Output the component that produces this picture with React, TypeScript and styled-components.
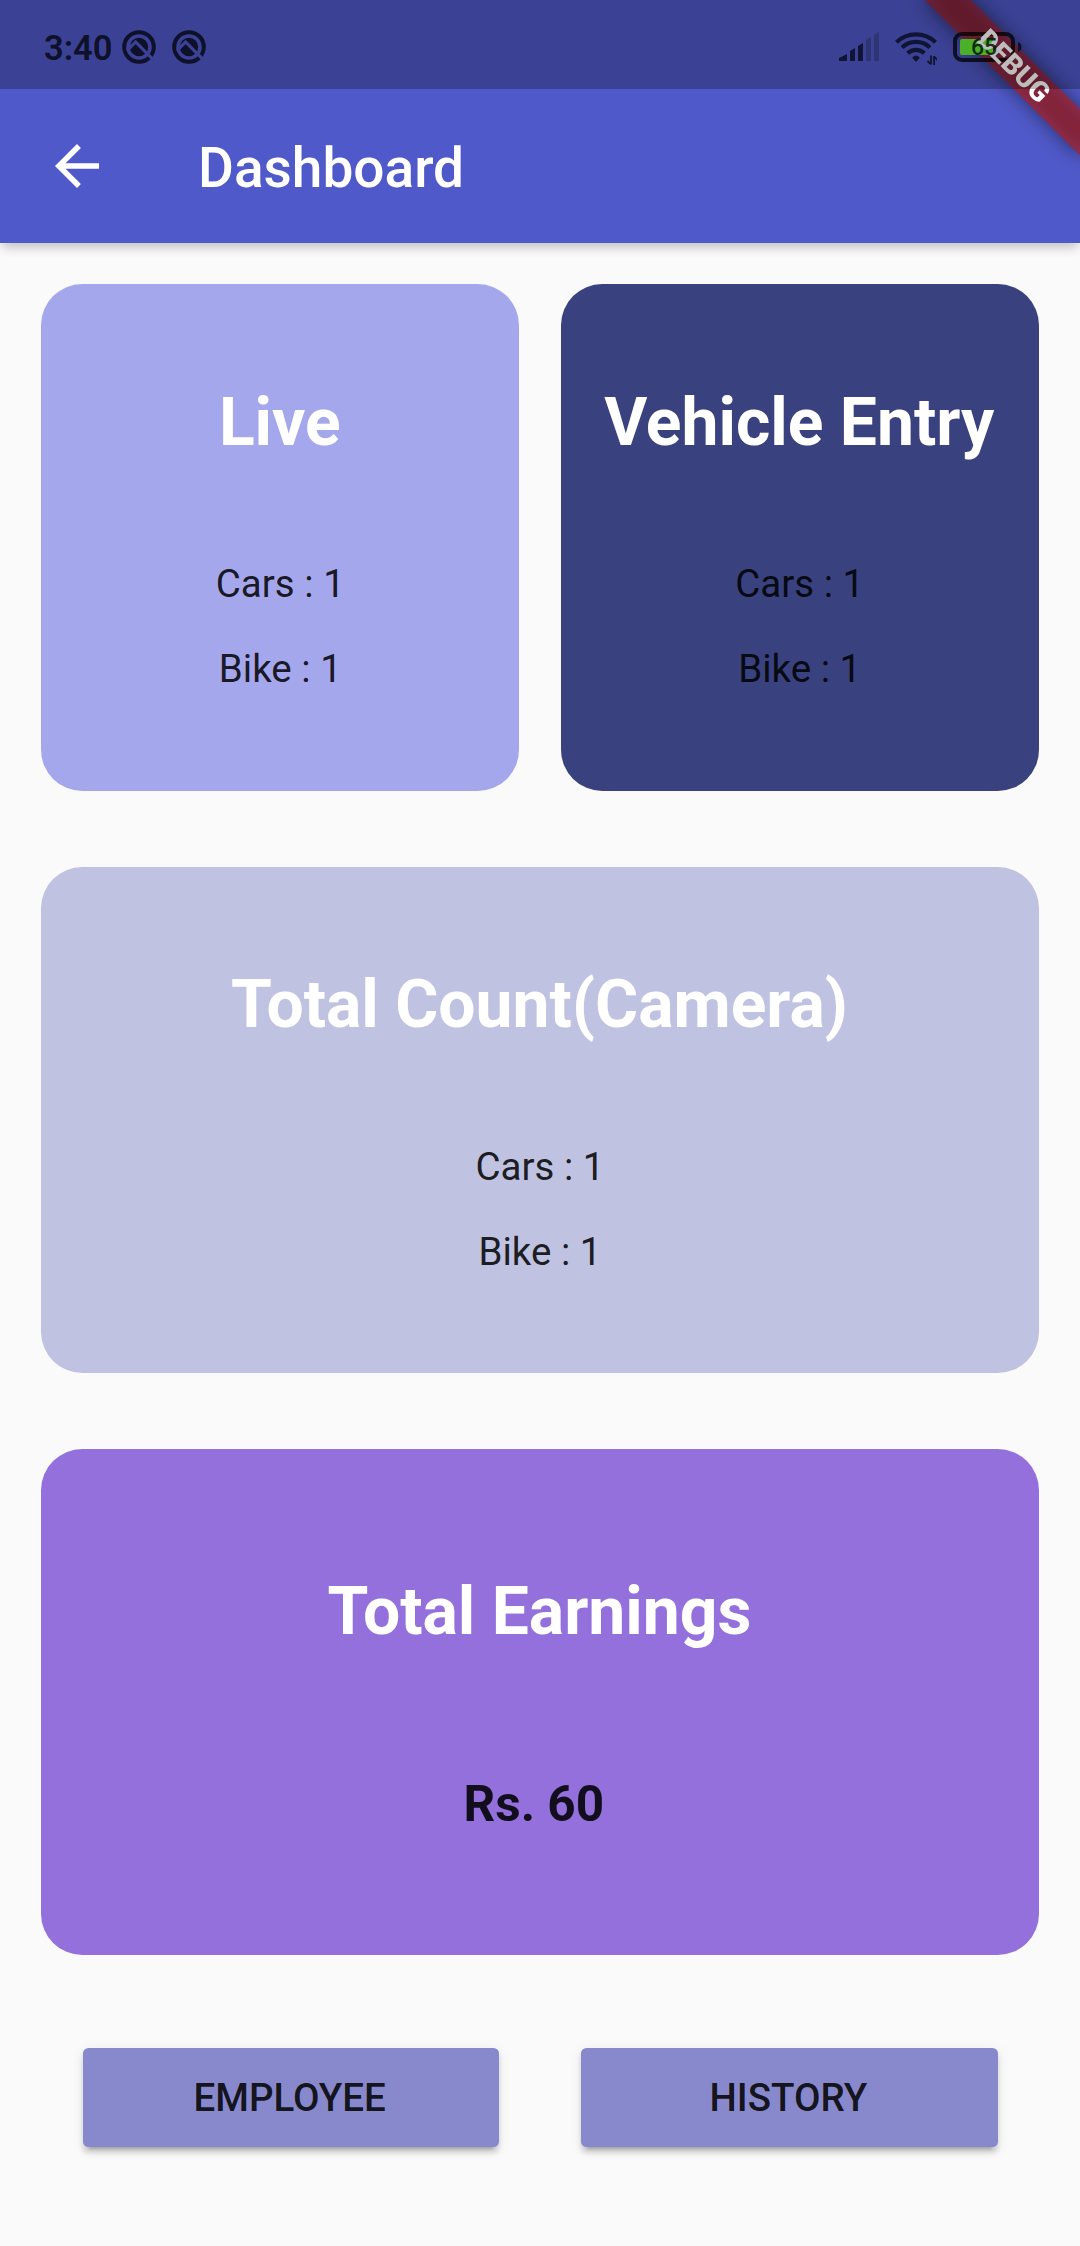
import React from 'react';
import styled, { createGlobalStyle } from 'styled-components';

const GlobalStyle = createGlobalStyle`
  *, *::before, *::after { box-sizing: border-box; }
  body { margin: 0; background: #fafafa; }
`;

const ink = 'rgba(0, 0, 0, 0.87)';

const Screen = styled.div`
  position: relative;
  display: flex;
  flex-direction: column;
  width: 1080px;
  height: 2246px;
  overflow: hidden;
  background: #fafafa;
  color: ${ink};
  font-family: Roboto, 'Liberation Sans', sans-serif;
`;

const Header = styled.header`
  position: relative;
  z-index: 0;
  flex: none;
  display: flex;
  flex-direction: column;
  height: 243px;
  background: #5059c9;
  box-shadow:
    0 7px 10px -3px rgba(0, 0, 0, 0.19),
    0 3px 14px 0 rgba(0, 0, 0, 0.07);
`;

const StatusBar = styled.div`
  position: relative;
  display: flex;
  align-items: center;
  justify-content: space-between;
  height: 89px;
  padding: 5px 58px 0 44px;
  background: rgba(0, 0, 0, 0.26);
`;

const StatusGroup = styled.div<{ $gap: number }>`
  display: flex;
  align-items: center;
  gap: ${(p) => p.$gap}px;
`;

const Clock = styled.span`
  width: 69px;
  margin-right: -7px;
  padding-top: 2px;
  font-size: 34.5px;
  font-weight: 600;
  line-height: 40px;
  color: #0e1129;
`;

const Toolbar = styled.div`
  display: flex;
  align-items: center;
  flex: 1;
  padding-left: 44px;
`;

const BackButton = styled.button`
  display: flex;
  margin: 0 88px 0 0;
  padding: 0;
  border: 0;
  background: none;
  color: #fff;
`;

const PageTitle = styled.h1`
  margin: 0;
  padding-top: 4px;
  font-size: 55px;
  font-weight: 500;
  line-height: 64px;
  color: #fff;
`;

const BannerFrame = styled.div<{ $layer: number }>`
  position: absolute;
  top: 0;
  right: 0;
  z-index: ${(p) => p.$layer};
  width: 220px;
  height: 220px;
  overflow: hidden;
`;

const BannerAxis = styled.div`
  position: absolute;
  top: 0;
  left: 220px;
  width: 0;
  height: 0;
  transform: rotate(45deg);
`;

const BannerPiece = styled.div`
  position: absolute;
  left: -110px;
  top: 77px;
  width: 220px;
  height: 33px;
`;

const BannerShade = styled(BannerPiece)`
  background: rgba(0, 0, 0, 0.5);
  filter: blur(9.9px);
`;

const BannerStrip = styled(BannerPiece)`
  background: rgba(183, 28, 28, 0.627);
`;

/* The label is dimmed where it crosses the status bar. */
const BannerLabel = styled(BannerPiece)`
  background: linear-gradient(135deg, #bfbcbc 112px, #fff 112.5px);
  background-clip: text;
  -webkit-background-clip: text;
  color: transparent;
  font-size: 28.05px;
  font-weight: 900;
  line-height: 33px;
  text-align: center;
`;

const BatteryBox = styled.div`
  position: relative;
  display: flex;
`;

const BatteryLevel = styled.span`
  position: absolute;
  z-index: 2;
  top: 1px;
  left: 0;
  width: 62px;
  font-size: 23px;
  font-weight: 500;
  line-height: 30px;
  text-align: center;
  color: rgba(4, 28, 6, 0.88);
`;

const Content = styled.main`
  display: flex;
  flex-direction: column;
  gap: 76.1px;
  padding: 41.25px 41.25px 0;
`;

const CardRow = styled.div`
  display: grid;
  grid-template-columns: 1fr 1fr;
  gap: 41.25px;
`;

const Card = styled.section<{ $tone: string; $top?: number }>`
  display: flex;
  flex-direction: column;
  align-items: center;
  justify-content: space-evenly;
  height: 506.25px;
  padding-top: ${(p) => p.$top ?? 0}px;
  border-radius: 41.25px;
  background: ${(p) => p.$tone};
`;

const CardTitle = styled.h2`
  margin: -0.7px 0 0.7px;
  padding-right: 1px;
  font-size: 66px;
  font-weight: 700;
  line-height: 80px;
  white-space: nowrap;
  color: #fff;
`;

const Counts = styled.div`
  display: flex;
  flex-direction: column;
  align-items: center;
  gap: 40px;
  margin-top: -1px;
`;

const Count = styled.span`
  font-size: 38.5px;
  line-height: 45px;
`;

const Amount = styled.span`
  padding-top: 1px;
  font-size: 49.5px;
  font-weight: 700;
  line-height: 58px;
  white-space: pre;
`;

const Actions = styled.div`
  display: grid;
  grid-template-columns: 1fr 1fr;
  gap: 82.5px;
  margin-top: 16.5px;
  padding: 0 41.25px;
`;

const ActionButton = styled.button`
  height: 99px;
  padding: 0 2px 0 0;
  border: 0;
  border-radius: 5.5px;
  background: #8888cc;
  box-shadow:
    0 8.25px 2.75px -5.5px rgba(0, 0, 0, 0.2),
    0 5.5px 5.5px 0 rgba(0, 0, 0, 0.14),
    0 2.75px 13.75px 0 rgba(0, 0, 0, 0.08);
  color: ${ink};
  font-family: inherit;
  font-size: 38.5px;
  font-weight: 500;
  line-height: 45px;
`;

const QBadge = () => (
  <svg width="34" height="34" viewBox="0 0 34 34" fill="none">
    <circle cx="17" cy="17" r="14.8" stroke="#0e1129" strokeWidth="4" />
    <circle cx="17" cy="17" r="9.2" fill="#0e1129" />
    <path d="M5 20.500l8.600-8.600L32 30.300" stroke="#3b4295" strokeWidth="3.200" />
  </svg>
);

const Signal = () => (
  <svg width="41" height="30" viewBox="0 0 41 30" fill="#111535">
    <path d="M1 26l8-4v7h-8z" />
    <path d="M12 19l5-3v13h-5z" />
    <path d="M20 14l5-3v18h-5z" />
    <path d="M28 8l5-3v24h-5z" fill="#2e3474" />
    <path d="M36 3l5-3v29h-5z" fill="#2e3474" />
  </svg>
);

const WifiIcon = styled.svg`
  margin-top: 4px;
`;

const Wifi = () => (
  <WifiIcon width="42" height="34" viewBox="0 0 42 34" fill="none" stroke="#111535" strokeWidth="4.200">
    <path d="M1.500 10.200a28 28 0 0 1 39 0M7 15.600a20 20 0 0 1 28 0M12.700 21.200a12 12 0 0 1 16.600 0" />
    <path d="M17.200 25.800q3.800-4.500 7.600 0l-3.800 4.200z" fill="#111535" stroke="none" />
    <path d="M36 23.500v9M32.500 29l3 3M39 33v-9M39.500 25l3 3" strokeWidth="1.800" />
  </WifiIcon>
);

const Battery = () => (
  <BatteryBox>
    <svg width="69" height="30" viewBox="0 0 69 30">
      <rect x="2" y="2" width="58" height="26" rx="7" fill="none" stroke="#000" strokeOpacity="0.75" strokeWidth="4" />
      <path d="M9 7h31v16H9a2 2 0 0 1-2-2V9a2 2 0 0 1 2-2z" fill="#4caf29" />
      <path d="M65 10q3.500 1 3.500 5t-3.500 5z" fill="#0e1129" />
    </svg>
    <BatteryLevel>65</BatteryLevel>
  </BatteryBox>
);

const BackArrow = () => (
  <svg width="66" height="66" viewBox="0 0 24 24" fill="currentColor">
    <path d="M20 11H7.830l5.590-5.590L12 4l-8 8 8 8 1.410-1.410L7.830 13H20v-2z" />
  </svg>
);

const VehicleCard = ({ title, tone, cars, bikes }: { title: string; tone: string; cars: number; bikes: number }) => (
  <Card $tone={tone}>
    <CardTitle>{title}</CardTitle>
    <Counts>
      <Count>{`Cars : ${cars}`}</Count>
      <Count>{`Bike : ${bikes}`}</Count>
    </Counts>
  </Card>
);

export default function App() {
  return (
    <Screen>
      <GlobalStyle />
      <Header>
        <BannerFrame $layer={0}>
          <BannerAxis>
            <BannerShade />
            <BannerStrip />
          </BannerAxis>
        </BannerFrame>
        <StatusBar>
          <StatusGroup $gap={16}>
            <Clock>3:40</Clock>
            <QBadge />
            <QBadge />
          </StatusGroup>
          <StatusGroup $gap={16}>
            <Signal />
            <Wifi />
            <Battery />
          </StatusGroup>
        </StatusBar>
        <Toolbar>
          <BackButton aria-label="Back">
            <BackArrow />
          </BackButton>
          <PageTitle>Dashboard</PageTitle>
        </Toolbar>
        <BannerFrame $layer={1}>
          <BannerAxis>
            <BannerLabel>DEBUG</BannerLabel>
          </BannerAxis>
        </BannerFrame>
      </Header>
      <Content>
        <CardRow>
          <VehicleCard title="Live" tone="#a5a7ed" cars={1} bikes={1} />
          <VehicleCard title="Vehicle Entry" tone="#39417f" cars={1} bikes={1} />
        </CardRow>
        <VehicleCard title="Total Count(Camera)" tone="#bfc2e1" cars={1} bikes={1} />
        <Card $tone="#9370db" $top={2}>
          <CardTitle>Total Earnings</CardTitle>
          <Amount>{'Rs. 60 '}</Amount>
        </Card>
        <Actions>
          <ActionButton>EMPLOYEE</ActionButton>
          <ActionButton>HISTORY</ActionButton>
        </Actions>
      </Content>
    </Screen>
  );
}
